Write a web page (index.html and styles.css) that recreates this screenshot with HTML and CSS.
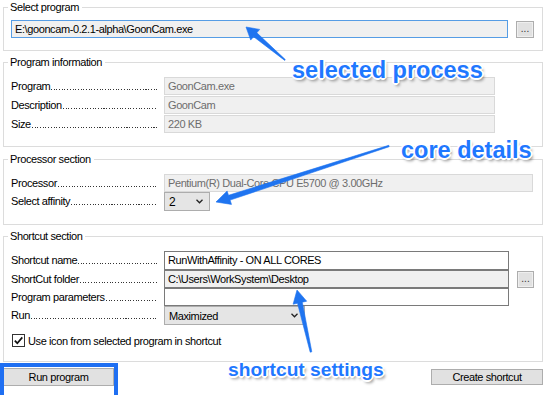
FILE: index.html
```html
<!DOCTYPE html>
<html>
<head>
<meta charset="utf-8">
<title>Run With Affinity</title>
<link rel="stylesheet" href="styles.css">
</head>
<body>
<div class="window">
  <fieldset class="group g1">
    <legend>Select program</legend>
    <div class="pickrow">
      <div class="field focus">E:\gooncam-0.2.1-alpha\GoonCam.exe</div>
      <div class="dotbtn">...</div>
    </div>
  </fieldset>

  <fieldset class="group g2">
    <legend>Program information</legend>
    <div class="rows info">
      <div class="label"><span>Program</span><i class="lead"></i></div>
      <div class="field ro">GoonCam.exe</div>
      <div class="label"><span>Description</span><i class="lead"></i></div>
      <div class="field ro">GoonCam</div>
      <div class="label"><span>Size</span><i class="lead"></i></div>
      <div class="field ro">220 KB</div>
    </div>
  </fieldset>

  <fieldset class="group g3">
    <legend>Processor section</legend>
    <div class="rows proc">
      <div class="label"><span>Processor</span><i class="lead"></i></div>
      <div class="field ro">Pentium(R) Dual-Core CPU E5700 @ 3.00GHz</div>
      <div class="label"><span>Select affinity</span><i class="lead"></i></div>
      <div class="combo small"><span>2</span><svg class="chev" width="7" height="5" viewBox="0 0 7 5"><path d="M0.5 0.8 L3.5 3.8 L6.5 0.8" fill="none" stroke="#222" stroke-width="1.3"/></svg></div>
    </div>
  </fieldset>

  <fieldset class="group g4">
    <legend>Shortcut section</legend>
    <div class="rows short">
      <div class="label"><span>Shortcut name</span><i class="lead"></i></div>
      <div class="field ed">RunWithAffinity - ON ALL CORES</div>
      <div></div>
      <div class="label"><span>ShortCut folder</span><i class="lead"></i></div>
      <div class="field ed ro2">C:\Users\WorkSystem\Desktop</div>
      <div class="dotbtn">...</div>
      <div class="label"><span>Program parameters</span><i class="lead"></i></div>
      <div class="field ed"></div>
      <div></div>
      <div class="label"><span>Run</span><i class="lead"></i></div>
      <div class="combo wide"><span>Maximized</span><svg class="chev" width="7" height="5" viewBox="0 0 7 5"><path d="M0.5 0.8 L3.5 3.8 L6.5 0.8" fill="none" stroke="#222" stroke-width="1.3"/></svg></div>
      <div></div>
    </div>
    <label class="check">
      <span class="box"><svg width="11" height="11" viewBox="0 0 11 11"><path d="M1.8 5.6 L4.3 8.2 L9.3 2.4" fill="none" stroke="#111" stroke-width="1.7"/></svg></span>
      <span>Use icon from selected program in shortcut</span>
    </label>
  </fieldset>

  <div class="actions">
    <button class="btn run">Run program</button>
    <button class="btn create">Create shortcut</button>
  </div>
</div>

<div class="highlight"></div>

<svg class="arrows" width="550" height="395" viewBox="0 0 550 395">
  <g fill="#1f74f0" stroke="#1f74f0" stroke-width="0.6" stroke-linejoin="round">
    <polygon points="246,27 259.7,29.4 256.8,32.8 285.3,59.6 284.7,60.4 253.6,36.7 250.7,40.1"/>
    <polygon points="216,202 227.1,191 228.5,195.3 388.8,145.3 389.2,146.7 230.1,200.1 231.5,204.4"/>
    <polygon points="297,290 306.7,301.2 302.3,302.2 311.8,351.8 310.2,352.2 297.5,303.3 293.1,304.2"/>
  </g>
</svg>

<div class="note n1">selected process</div>
<div class="note n2">core details</div>
<div class="note n3">shortcut settings</div>
</body>
</html>
```

FILE: styles.css
```css
* { box-sizing: border-box; }
html, body { margin: 0; padding: 0; }
body {
  width: 550px;
  height: 395px;
  overflow: hidden;
  position: relative;
  background: #ffffff;
  font-family: "Liberation Sans", Arial, sans-serif;
  font-size: 11px;
  letter-spacing: -0.4px;
  color: #000;
}
.window {
  padding: 0 7px 0 3px;
  display: flex;
  flex-direction: column;
}
.group {
  margin: 0;
  border: 1px solid #dcdcdc;
  padding: 0 0 0 7px;
  min-width: 0;
}
.group legend {
  margin-left: -3px;
  padding: 0 3px 0 2px;
  height: 14px;
  line-height: 14px;
}
.g1 { padding-top: 6px; padding-bottom: 12px; }
.g2 { margin-top: 4px; padding-top: 8px; padding-bottom: 13px; }
.g3 { margin-top: 5px; padding-top: 8px; padding-bottom: 14px; }
.g4 { margin-top: 4px; padding-top: 8px; padding-bottom: 14px; }

.pickrow { display: flex; align-items: flex-start; gap: 8px; }

.field {
  height: 18px;
  line-height: 16px;
  padding: 0 3px;
  border: 1px solid #d9d9d9;
  background: #f0f0f0;
  white-space: nowrap;
  overflow: hidden;
}
.field.focus {
  width: 497px;
  border-color: #569de5;
  color: #000;
}
.field.ro { color: #6d6d6d; }
.field.ed { border-color: #7a7a7a; background: #fff; color: #000; }
.field.ro2 { background: #f0f0f0; }

.dotbtn {
  width: 18px;
  height: 17px;
  margin-top: 1px;
  border: 1px solid #adadad;
  background: #e1e1e1;
  box-shadow: inset 0 0 0 1px #efefef;
  font-size: 10px;
  line-height: 13px;
  text-align: center;
  letter-spacing: 0;
  color: #333;
}

.rows { display: grid; }
.info { grid-template-columns: 153px 331px; row-gap: 1px; grid-auto-rows: 18px; }
.proc { grid-template-columns: 153px 369px; grid-auto-rows: 18px; }
.short {
  grid-template-columns: 153px 345px 25px;
  grid-template-rows: 19px 18px 18px 19px;
}
.short .field { height: auto; }
.short .dotbtn { width: 17px; height: 17px; margin: 1px 0 0 8px; }

.label {
  width: 146px;
  display: flex;
  align-items: flex-start;
  line-height: 18px;
  white-space: nowrap;
}
.lead {
  flex: 1;
  height: 1px;
  margin-top: 12px;
  margin-left: 1px;
  background: repeating-linear-gradient(to right, #333 0 1px, transparent 1px 2.7px);
}

.combo {
  height: 19px;
  border: 1px solid #adadad;
  background: #e5e5e5;
  display: flex;
  align-items: center;
  justify-content: space-between;
  padding: 0 6px 0 4px;
}
.combo.small { width: 46px; font-size: 12px; }
.combo.wide { width: 141px; }
.chev { display: block; }

.check {
  display: flex;
  align-items: center;
  gap: 3px;
  margin-top: 9px;
  margin-left: 1px;
  height: 13px;
}
.box {
  width: 13px;
  height: 13px;
  border: 1px solid #333;
  background: #fff;
  display: flex;
  align-items: center;
  justify-content: center;
}
.box svg { display: block; }

.actions {
  display: flex;
  justify-content: space-between;
  align-items: center;
  margin-top: 6px;
}
.btn {
  font-family: "Liberation Sans", Arial, sans-serif;
  font-size: 11px;
  letter-spacing: -0.4px;
  color: #000;
  background: #e1e1e1;
  border: 1px solid #adadad;
  padding: 0;
  margin: 0;
}
.btn.run { width: 111px; height: 18px; }
.btn.create { width: 112px; height: 16px; }

.highlight {
  position: absolute;
  left: 0;
  top: 363px;
  width: 118px;
  height: 40px;
  border: 4px solid #1f6ff2;
}

.arrows {
  position: absolute;
  left: 0;
  top: 0;
  pointer-events: none;
}

.note {
  position: absolute;
  font-family: "Liberation Sans", Arial, sans-serif;
  font-weight: bold;
  letter-spacing: 0;
  color: #1f78ff;
  white-space: nowrap;
  text-shadow:
    -1px -1px 0 #fff, 1px -1px 0 #fff, -1px 1px 0 #fff, 1px 1px 0 #fff,
    0 -2px 0 #fff, 0 2px 0 #fff, -2px 0 0 #fff, 2px 0 0 #fff,
    2px 3px 3px rgba(0,0,0,0.45);
}
.n1 { left: 292px; top: 57px; font-size: 23.5px; line-height: 27px; }
.n2 { left: 401px; top: 137px; font-size: 23.5px; line-height: 27px; }
.n3 { left: 228px; top: 359px; font-size: 19.2px; line-height: 22px; }
```
